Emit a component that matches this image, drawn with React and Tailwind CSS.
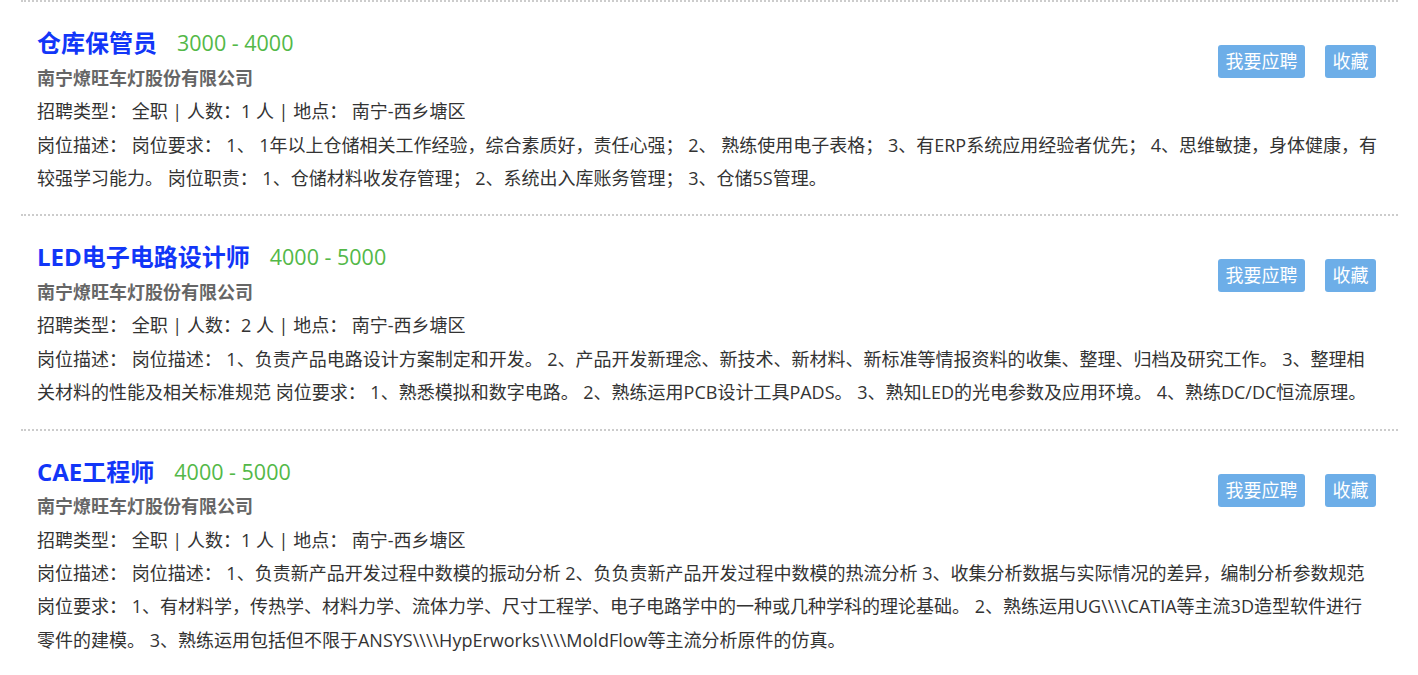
import React from "react";

const BS4 = "\\\\\\\\";

const jobs = [
  {
    title: "仓库保管员",
    salary: "3000 - 4000",
    count: "1",
    desc: [
      "岗位描述： 岗位要求： 1、 1年以上仓储相关工作经验，综合素质好，责任心强； 2、 熟练使用电子表格； 3、有ERP系统应用经验者优先； 4、思维敏捷，身体健康，有",
      "较强学习能力。 岗位职责： 1、仓储材料收发存管理； 2、系统出入库账务管理； 3、仓储5S管理。",
    ],
  },
  {
    title: "LED电子电路设计师",
    salary: "4000 - 5000",
    count: "2",
    desc: [
      "岗位描述： 岗位描述： 1、负责产品电路设计方案制定和开发。 2、产品开发新理念、新技术、新材料、新标准等情报资料的收集、整理、归档及研究工作。 3、整理相",
      "关材料的性能及相关标准规范 岗位要求： 1、熟悉模拟和数字电路。 2、熟练运用PCB设计工具PADS。 3、熟知LED的光电参数及应用环境。 4、熟练DC/DC恒流原理。",
    ],
  },
  {
    title: "CAE工程师",
    salary: "4000 - 5000",
    count: "1",
    desc: [
      "岗位描述： 岗位描述： 1、负责新产品开发过程中数模的振动分析 2、负负责新产品开发过程中数模的热流分析 3、收集分析数据与实际情况的差异，编制分析参数规范",
      "岗位要求： 1、有材料学，传热学、材料力学、流体力学、尺寸工程学、电子电路学中的一种或几种学科的理论基础。 2、熟练运用UG" + BS4 + "CATIA等主流3D造型软件进行",
      "零件的建模。 3、熟练运用包括但不限于ANSYS" + BS4 + "HypErworks" + BS4 + "MoldFlow等主流分析原件的仿真。",
    ],
  },
];

function Job({ job }) {
  return (
    <div className="border-t-2 border-dotted border-[#cccccc] pt-[26px] pb-[19.4px] px-4">
      <div className="flex justify-between items-start">
        <div>
          <div className="flex items-center h-[29.5px] mb-[4px]">
            <span className="text-[24px] font-bold text-[#1236f8] leading-[29.5px]">{job.title}</span>
            <span className="ml-[20px] text-[21.5px] text-[#53b848] leading-[29.5px]">{job.salary}</span>
          </div>
          <div className="text-[18px] font-bold text-[#666666] leading-[33.5px]">南宁燎旺车灯股份有限公司</div>
        </div>
        <div className="flex gap-[20px] mt-[17px] mr-[6px]">
          <button className="h-[33px] px-[7.5px] rounded-[3px] bg-[#6daee8] text-white text-[18px] leading-[33px]">我要应聘</button>
          <button className="h-[33px] px-[7.5px] rounded-[3px] bg-[#6daee8] text-white text-[18px] leading-[33px]">收藏</button>
        </div>
      </div>
      <div className="text-[18px] text-[#333333] leading-[33.5px]">
        <div className="whitespace-nowrap">招聘类型： 全职 | 人数：{job.count} 人 | 地点： 南宁-西乡塘区</div>
        {job.desc.map((l, i) => (
          <div key={i} className="whitespace-nowrap leading-[33.2px]">{l}</div>
        ))}
      </div>
    </div>
  );
}

export default function App() {
  return (
    <div
      className="bg-white min-h-[675px]"
      style={{ fontFamily: '"Open Sans", "Noto Sans CJK SC", sans-serif' }}
    >
      <div className="ml-[21px] w-[1377px]">
        {jobs.map((j, i) => (
          <Job key={i} job={j} />
        ))}
      </div>
    </div>
  );
}
